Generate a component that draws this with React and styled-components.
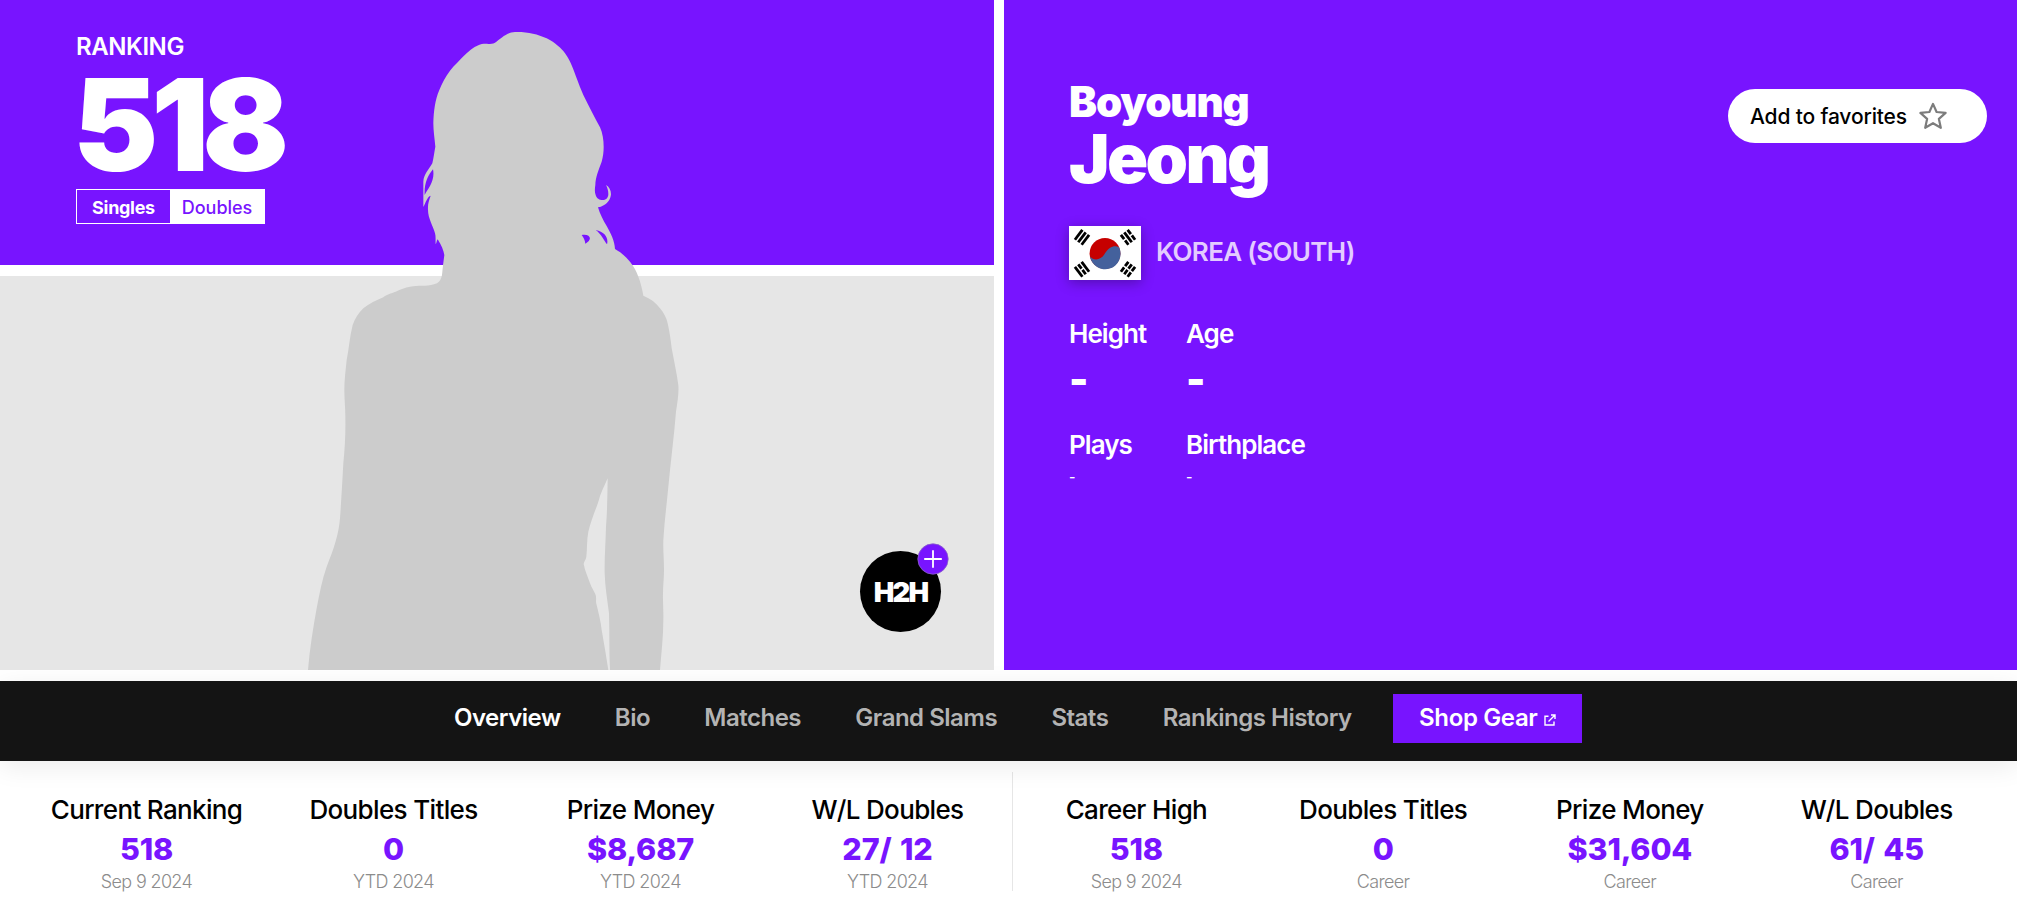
import React from 'react'
import styled, { createGlobalStyle } from 'styled-components'

const tabs = ['Overview', 'Bio', 'Matches', 'Grand Slams', 'Stats', 'Rankings History']

const season = [
	{ label: 'Current Ranking', value: '518', note: 'Sep 9 2024' },
	{ label: 'Doubles Titles', value: '0', note: 'YTD 2024' },
	{ label: 'Prize Money', value: '$8,687', note: 'YTD 2024' },
	{ label: 'W/L Doubles', value: '27/ 12', note: 'YTD 2024' }
]

const career = [
	{ label: 'Career High', value: '518', note: 'Sep 9 2024' },
	{ label: 'Doubles Titles', value: '0', note: 'Career' },
	{ label: 'Prize Money', value: '$31,604', note: 'Career' },
	{ label: 'W/L Doubles', value: '61/ 45', note: 'Career' }
]

function Silhouette() {
	return (
		<Figure viewBox="0 0 1200 2010" aria-hidden="true">
			<path
				fillRule="evenodd"
				d="M645 96 C682 95 712 102 740 115 C767 129 784 145 795 160 C814 187 821 212 830 235 C836 252 843 269 850 285
				C867 320 884 352 900 382 C908 400 911 420 911 440 C911 456 909 470 905 485 C895 512 887 530 886 555
				C884 568 884 578 887 585 C890 596 898 600 908 600 C920 600 925 592 925 582 C925 572 922 563 918 555
				C927 560 933 570 933 583 C932 598 922 610 911 616 C905 620 900 621 894 622 C900 642 909 660 920 678
				C932 700 944 722 945 747 C964 758 978 770 990 785 C1002 800 1010 815 1015 830 C1022 848 1027 868 1030 887
				C1052 896 1068 908 1080 925 C1092 940 1099 952 1103 970 C1109 996 1112 1020 1115 1045 C1122 1083 1130 1118 1135 1155
				C1137 1180 1132 1208 1128 1235 C1122 1310 1112 1385 1105 1460 C1100 1514 1093 1566 1090 1620 C1089 1650 1092 1680 1092 1710
				C1092 1734 1089 1756 1089 1780 C1088 1806 1091 1834 1090 1860 C1090 1910 1084 1960 1080 2010
				L930 2010 C927 1954 929 1896 927 1840 C922 1800 915 1760 914 1720 C913 1674 917 1626 918 1580 C922 1532 922 1484 923 1435
				C914 1456 901 1480 895 1505 C885 1535 872 1564 865 1595 C860 1620 862 1645 859 1670 C858 1678 852 1684 851 1692
				C855 1714 864 1731 870 1750 C875 1764 882 1773 887 1785 C890 1795 886 1805 890 1815 C896 1840 902 1864 905 1890
				C912 1930 919 1970 925 2010 L24 2010 C29 1948 39 1886 50 1825 C58 1782 66 1740 80 1700
				C90 1674 101 1647 108 1620 C114 1600 118 1578 120 1555 C124 1500 127 1445 130 1390 C135 1343 137 1296 136 1250
				C136 1224 133 1197 133 1170 C133 1140 137 1110 140 1080 C147 1045 149 1010 158 975 C165 956 175 939 190 925
				C207 911 230 901 250 892 C256 884 275 880 287 875 C302 868 315 862 330 860 C354 856 378 860 402 853
				C416 850 423 840 426 825 C428 805 430 785 433 765 C431 752 424 735 413 718 C410 722 410 728 407 733
				C406 722 408 710 405 700 C399 678 384 655 384 630 C383 610 387 602 392 587 C382 590 377 608 370 621
				L370 545 C371 524 385 510 397 490 C401 474 403 456 406 440 C404 416 400 392 400 370 C401 335 405 300 418 270
				C426 249 437 230 450 212 C464 194 478 182 492 167 C506 154 520 142 535 136 C552 127 568 136 585 128
				C603 116 617 98 645 96 Z
				M399 508 C384 526 372 550 374 585 C384 565 406 542 399 508 Z
				M845 705 C870 700 880 718 856 731 C855 720 851 714 845 705 Z
				M887 690 C915 695 926 715 921 733 C912 722 904 702 887 690 Z"
			/>
		</Figure>
	)
}

// the four trigrams, each one three bars; a split bar has a gap in its middle
function Trigram({ x, y, angle, bars }) {
	return (
		<g transform={`translate(${x} ${y}) rotate(${angle})`} stroke="#000" strokeWidth="2.8">
			{bars.map((split, i) => (
				<path
					key={i}
					d={split ? 'M-6.2 0h5.4M.8 0h5.4' : 'M-6.2 0h12.4'}
					transform={`translate(0 ${(i - 1) * 4.2})`}
				/>
			))}
		</g>
	)
}

function KoreaFlag() {
	return (
		<Flag viewBox="0 0 72 54" role="img" aria-label="Korea">
			<path fill="#fff" d="M0 0h72v54H0z" />
			<circle cx="36" cy="27.3" r="15.4" fill="#c60000" />
			<path
				fill="#44619c"
				d="M21 30.5 C25 35 32 34.5 36 27.3 C40 20.8 46 18.5 50.2 21.5 A15.4 15.4 0 1 1 21 30.5 Z"
			/>
			<Trigram x={13} y={11.3} angle={-53} bars={[0, 0, 0]} />
			<Trigram x={59} y={11.3} angle={53} bars={[1, 0, 1]} />
			<Trigram x={13} y={43.3} angle={53} bars={[0, 1, 0]} />
			<Trigram x={59} y={43.3} angle={-53} bars={[1, 1, 1]} />
		</Flag>
	)
}

function StatGroup({ items, divided }) {
	return (
		<Group $divided={divided}>
			{items.map(item => (
				<Stat key={item.label}>
					<StatLabel>{item.label}</StatLabel>
					<StatValue>{item.value}</StatValue>
					<StatNote>{item.note}</StatNote>
				</Stat>
			))}
		</Group>
	)
}

function App() {
	return (
		<Page>
			<Global />
			<Hero>
				<Left>
					<RankingPanel>
						<RankingTitle>RANKING</RankingTitle>
						<RankingNumber>518</RankingNumber>
						<Toggle>
							<ToggleItem $bold>Singles</ToggleItem>
							<ToggleItem $active>Doubles</ToggleItem>
						</Toggle>
					</RankingPanel>
					<PhotoPanel />
					<Silhouette />
					<HeadToHead>
						H2H
						<Plus viewBox="0 0 32 32">
							<circle cx="16" cy="16" r="15.2" fill="#7814ff" stroke="#8a62c8" strokeWidth=".8" />
							<path d="M16 7.2v17.6M7.2 16h17.6" stroke="#fff" strokeWidth="1.8" />
						</Plus>
					</HeadToHead>
				</Left>

				<Profile>
					<div>
						<FirstName>Boyoung</FirstName>
						<LastName>Jeong</LastName>
						<Country>
							<KoreaFlag />
							<span>KOREA (SOUTH)</span>
						</Country>
						<Facts>
							<Fact>
								<dt>Height</dt>
								<BigValue>-</BigValue>
							</Fact>
							<Fact>
								<dt>Age</dt>
								<BigValue>-</BigValue>
							</Fact>
							<Fact>
								<dt>Plays</dt>
								<SmallValue>-</SmallValue>
							</Fact>
							<Fact>
								<dt>Birthplace</dt>
								<SmallValue>-</SmallValue>
							</Fact>
						</Facts>
					</div>
					<Favorite>
						Add to favorites
						<svg width="28" height="28" viewBox="0 0 28 28">
							<path
								d="M14 1.9l3.6 8.1 9 .9-6.7 6 1.9 8.9-7.8-4.6-7.8 4.6 1.9-8.9-6.7-6 9-.9z"
								fill="none"
								stroke="#7c7c7c"
								strokeWidth="2.2"
								strokeLinejoin="round"
							/>
						</svg>
					</Favorite>
				</Profile>
			</Hero>

			<Nav>
				{tabs.map((tab, i) => (
					<Tab key={tab} $active={i === 0}>{tab}</Tab>
				))}
				<Shop>
					Shop Gear
					<svg width="12" height="12" viewBox="0 0 12 12" fill="none" stroke="#fff" strokeWidth="1.4">
						<path d="M4.5 2.2H1v8.8h9V7.5M4.5 7.5l6-6M7 1h4v4" />
					</svg>
				</Shop>
			</Nav>

			<Stats>
				<StatGroup items={season} divided />
				<StatGroup items={career} />
			</Stats>
		</Page>
	)
}

const Global = createGlobalStyle`
	body {
		margin: 0;
		background: #fff;
		overflow: hidden;
	}
`

const Page = styled.div`
	width: 2017px;
	height: 919px;
	overflow: hidden;
	font-family: Inter, "Liberation Sans", sans-serif;
	white-space: nowrap;
`

const Hero = styled.section`
	position: relative;
	z-index: 1;
	display: flex;
	gap: 10px;
	height: 670px;
`

const Left = styled.div`
	position: relative;
	width: 994px;
	display: flex;
	flex-direction: column;
	gap: 11px;
`

const RankingPanel = styled.div`
	box-sizing: border-box;
	height: 265px;
	padding: 32px 0 0 76px;
	background: #7814ff;
	color: #fff;
`

const RankingTitle = styled.div`
	font-size: 24px;
	font-weight: 600;
	line-height: 29px;
	letter-spacing: -.45px;
`

const RankingNumber = styled.div`
	margin: 9px 0 9px -3px;
	font-size: 128px;
	font-weight: 900;
	line-height: 110px;
	letter-spacing: -7px;
`

const Toggle = styled.div`
	box-sizing: border-box;
	display: flex;
	width: 189px;
	height: 35px;
	border: 1px solid #fff;
`

const ToggleItem = styled.span`
	flex: ${p => p.$active ? '0 0 94px' : '1'};
	background: ${p => p.$active ? '#fff' : 'transparent'};
	color: ${p => p.$active ? '#7814ff' : '#fff'};
	font-size: 18px;
	font-weight: ${p => p.$bold ? 700 : 500};
	line-height: 35px;
	letter-spacing: ${p => p.$bold ? '-.3px' : '0'};
	text-align: center;
`

const PhotoPanel = styled.div`
	flex: 1;
	background: #e6e6e6;
`

const Figure = styled.svg`
	position: absolute;
	left: 300px;
	top: 0;
	width: 400px;
	height: 670px;
	fill: #ccc;
`

const HeadToHead = styled.div`
	position: absolute;
	left: 860px;
	top: 551px;
	width: 81px;
	height: 81px;
	border-radius: 50%;
	background: #000;
	color: #fff;
	font-size: 27.5px;
	font-weight: 900;
	line-height: 83px;
	letter-spacing: -1.8px;
	text-align: center;
`

const Plus = styled.svg`
	position: absolute;
	left: 57px;
	top: -8px;
	width: 32px;
	height: 32px;
`

const Profile = styled.div`
	box-sizing: border-box;
	flex: 1;
	display: flex;
	justify-content: space-between;
	align-items: flex-start;
	padding: 81px 30px 0 65px;
	background: #7814ff;
	color: #fff;
`

const FirstName = styled.div`
	font-size: 42px;
	font-weight: 900;
	line-height: 42px;
	letter-spacing: -1.15px;
`

const LastName = styled.div`
	font-size: 68px;
	font-weight: 900;
	line-height: 70px;
	letter-spacing: -2.6px;
`

const Country = styled.div`
	display: flex;
	gap: 15px;
	margin: 33px 0 37px;
	color: #e4ccff;
	font-size: 26px;
	font-weight: 600;
	line-height: 51px;
	letter-spacing: -.7px;
`

const Flag = styled.svg`
	width: 72px;
	height: 54px;
	box-shadow: 0 3px 12px rgba(0, 0, 0, .3);
`

const Facts = styled.dl`
	display: grid;
	grid-template-columns: 117px auto;
	grid-template-rows: 111px auto;
	margin: 0;
`

const Fact = styled.div`
	font-size: 26px;
	font-weight: 600;
	line-height: 33px;
	letter-spacing: -.95px;
`

const BigValue = styled.dd`
	margin: 10px 0 0;
	font-size: 41px;
	font-weight: 900;
	line-height: 38px;
`

const SmallValue = styled.dd`
	margin: 4px 0 0;
	font-size: 14px;
	font-weight: 500;
	line-height: 24px;
`

const Favorite = styled.div`
	box-sizing: border-box;
	display: flex;
	align-items: center;
	justify-content: space-between;
	width: 259px;
	height: 54px;
	margin-top: 8px;
	padding: 0 40px 0 22px;
	border-radius: 27px;
	background: #fff;
	color: #000;
	font-size: 21px;
	font-weight: 500;
	letter-spacing: -.15px;
`

const Nav = styled.nav`
	position: relative;
	box-sizing: border-box;
	display: flex;
	gap: 54.3px;
	height: 80px;
	margin-top: 11px;
	padding: 13px 0 0 454px;
	background: #141414;
	box-shadow: 0 6px 26px rgba(0, 0, 0, .08);
`

const Tab = styled.span`
	color: ${p => p.$active ? '#fff' : '#b3b3b3'};
	font-size: 24px;
	font-weight: 600;
	line-height: 48px;
	letter-spacing: -.5px;
`

const Shop = styled.span`
	box-sizing: border-box;
	display: flex;
	align-items: center;
	gap: 6px;
	width: 189px;
	height: 49px;
	margin-left: -13px;
	padding: 0 0 2px 26px;
	background: #7814ff;
	color: #fff;
	font-size: 24px;
	font-weight: 600;
	letter-spacing: -.35px;

	svg {
		margin-top: 5px;
	}
`

const Stats = styled.section`
	display: flex;
	padding: 11px 17px 0 23px;
`

const Group = styled.div`
	box-sizing: border-box;
	display: flex;
	width: ${p => p.$divided ? '990px' : '987px'};
	height: 119px;
	padding-right: ${p => p.$divided ? '1px' : 0};
	border-right: ${p => p.$divided ? '1px solid #e6e6e6' : 0};
`

const Stat = styled.div`
	flex: 1;
	padding-top: 22px;
	text-align: center;
`

const StatLabel = styled.div`
	color: #000;
	font-size: 26px;
	font-weight: 500;
	line-height: 32px;
	letter-spacing: -.65px;
`

const StatValue = styled.div`
	margin-top: 1px;
	color: #7814ff;
	font-size: 30.5px;
	font-weight: 800;
	line-height: 44px;
	letter-spacing: -.15px;
	word-spacing: 2px;
`

const StatNote = styled.div`
	color: #8c8c8c;
	font-size: 18px;
	font-weight: 300;
	line-height: 22px;
	letter-spacing: -.65px;
`

export default App
